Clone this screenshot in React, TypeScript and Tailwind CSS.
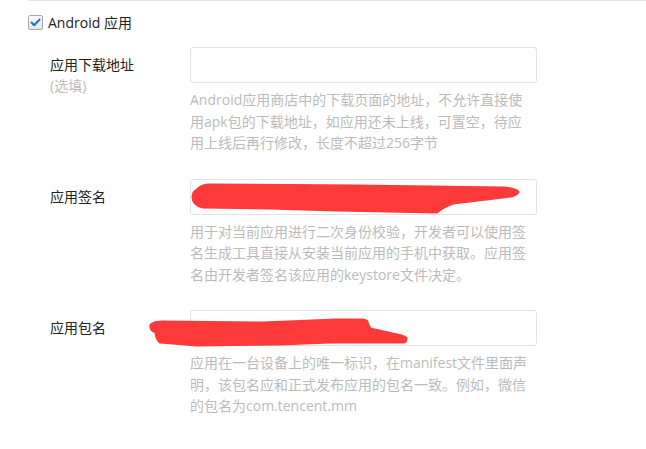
import React from 'react';

type Field = {
    label: string;
    optional?: boolean;
    help: string;
    scribble?: React.ReactNode;
};

function ScribbleSign() {
    return (
        <svg className="pointer-events-none absolute left-0 top-0 overflow-visible" width="347" height="36" viewBox="0 0 347 36">
            <path
                d="M7 11 Q12 6 20 6 L167 7 L313 9 Q326 10 328 13 Q326 17 313 18 L263 24 Q252 28 247 33 L147 31 L80 29 L13 28 Q3 26 3 18 Q3 13 7 11 Z"
                fill="#fc3a3a"
                stroke="#fc3a3a"
                strokeWidth="3"
                strokeLinejoin="round"
            />
        </svg>
    );
}

function ScribblePackage() {
    return (
        <svg className="pointer-events-none absolute left-0 top-0 overflow-visible" width="347" height="36" viewBox="0 0 347 36">
            <path
                d="M-39 15 Q-36 12 -27 12 L73 13 L147 10 L173 10 Q178 11 177 13 L180 19 L207 25 Q217 27 216 29 Q216 32 213 32 L140 32 L90 34 L7 35 L-30 32 Q-34 28 -34 22 Q-40 20 -39 15 Z"
                fill="#fc3a3a"
                stroke="#fc3a3a"
                strokeWidth="3"
                strokeLinejoin="round"
            />
        </svg>
    );
}

const fields: Field[] = [
    {
        label: '应用下载地址',
        optional: true,
        help: 'Android应用商店中的下载页面的地址，不允许直接使用apk包的下载地址，如应用还未上线，可置空，待应用上线后再行修改，长度不超过256字节',
    },
    {
        label: '应用签名',
        help: '用于对当前应用进行二次身份校验，开发者可以使用签名生成工具直接从安装当前应用的手机中获取。应用签名由开发者签名该应用的keystore文件决定。',
        scribble: <ScribbleSign />,
    },
    {
        label: '应用包名',
        help: '应用在一台设备上的唯一标识，在manifest文件里面声明，该包名应和正式发布应用的包名一致。例如，微信的包名为com.tencent.mm',
        scribble: <ScribblePackage />,
    },
];

export default function App() {
    return (
        <div
            className="min-h-[449px] w-[646px] bg-white text-[14px] text-[#333]"
            style={{ fontFamily: '"Open Sans", "Noto Sans CJK SC", sans-serif' }}
        >
            <div className="ml-[28px] border-t border-[#e4e4ea] pt-[11px]">
                {/* Platform toggle */}
                <label className="flex h-5 items-center gap-[5px]">
                    <span className="flex h-[15px] w-[15px] items-center justify-center rounded-[2px] border border-[#a9a9a9] bg-gradient-to-b from-[#fbfbfb] to-[#e6e6e6]">
                        <svg width="11" height="9" viewBox="0 0 11 9">
                            <path d="M1.5 4.5 L4.2 7.2 L9.5 1.6" fill="none" stroke="#1a6fd1" strokeWidth="2" strokeLinecap="round" strokeLinejoin="round" />
                        </svg>
                    </span>
                    <span className="text-[#222]">Android 应用</span>
                </label>

                {/* Fields */}
                <div className="mt-[15px] pl-[22px]">
                    {fields.map((f) => (
                        <div key={f.label} className="mb-[25px] flex">
                            <div className="w-[140px] shrink-0 pt-[7px] leading-[21px]">
                                <div className="text-[#222]">{f.label}</div>
                                {f.optional && <div className="text-[#bbb]">(选填)</div>}
                            </div>
                            <div className="w-[347px]">
                                <div className="relative">
                                    <input className="block h-[36px] w-[347px] rounded-[3px] border border-[#e3e3e3] bg-white px-2 outline-none" />
                                    {f.scribble}
                                </div>
                                <p className="mt-[6px] w-[338px] leading-[21.5px] text-[#bbb]">{f.help}</p>
                            </div>
                        </div>
                    ))}
                </div>
            </div>
        </div>
    );
}
